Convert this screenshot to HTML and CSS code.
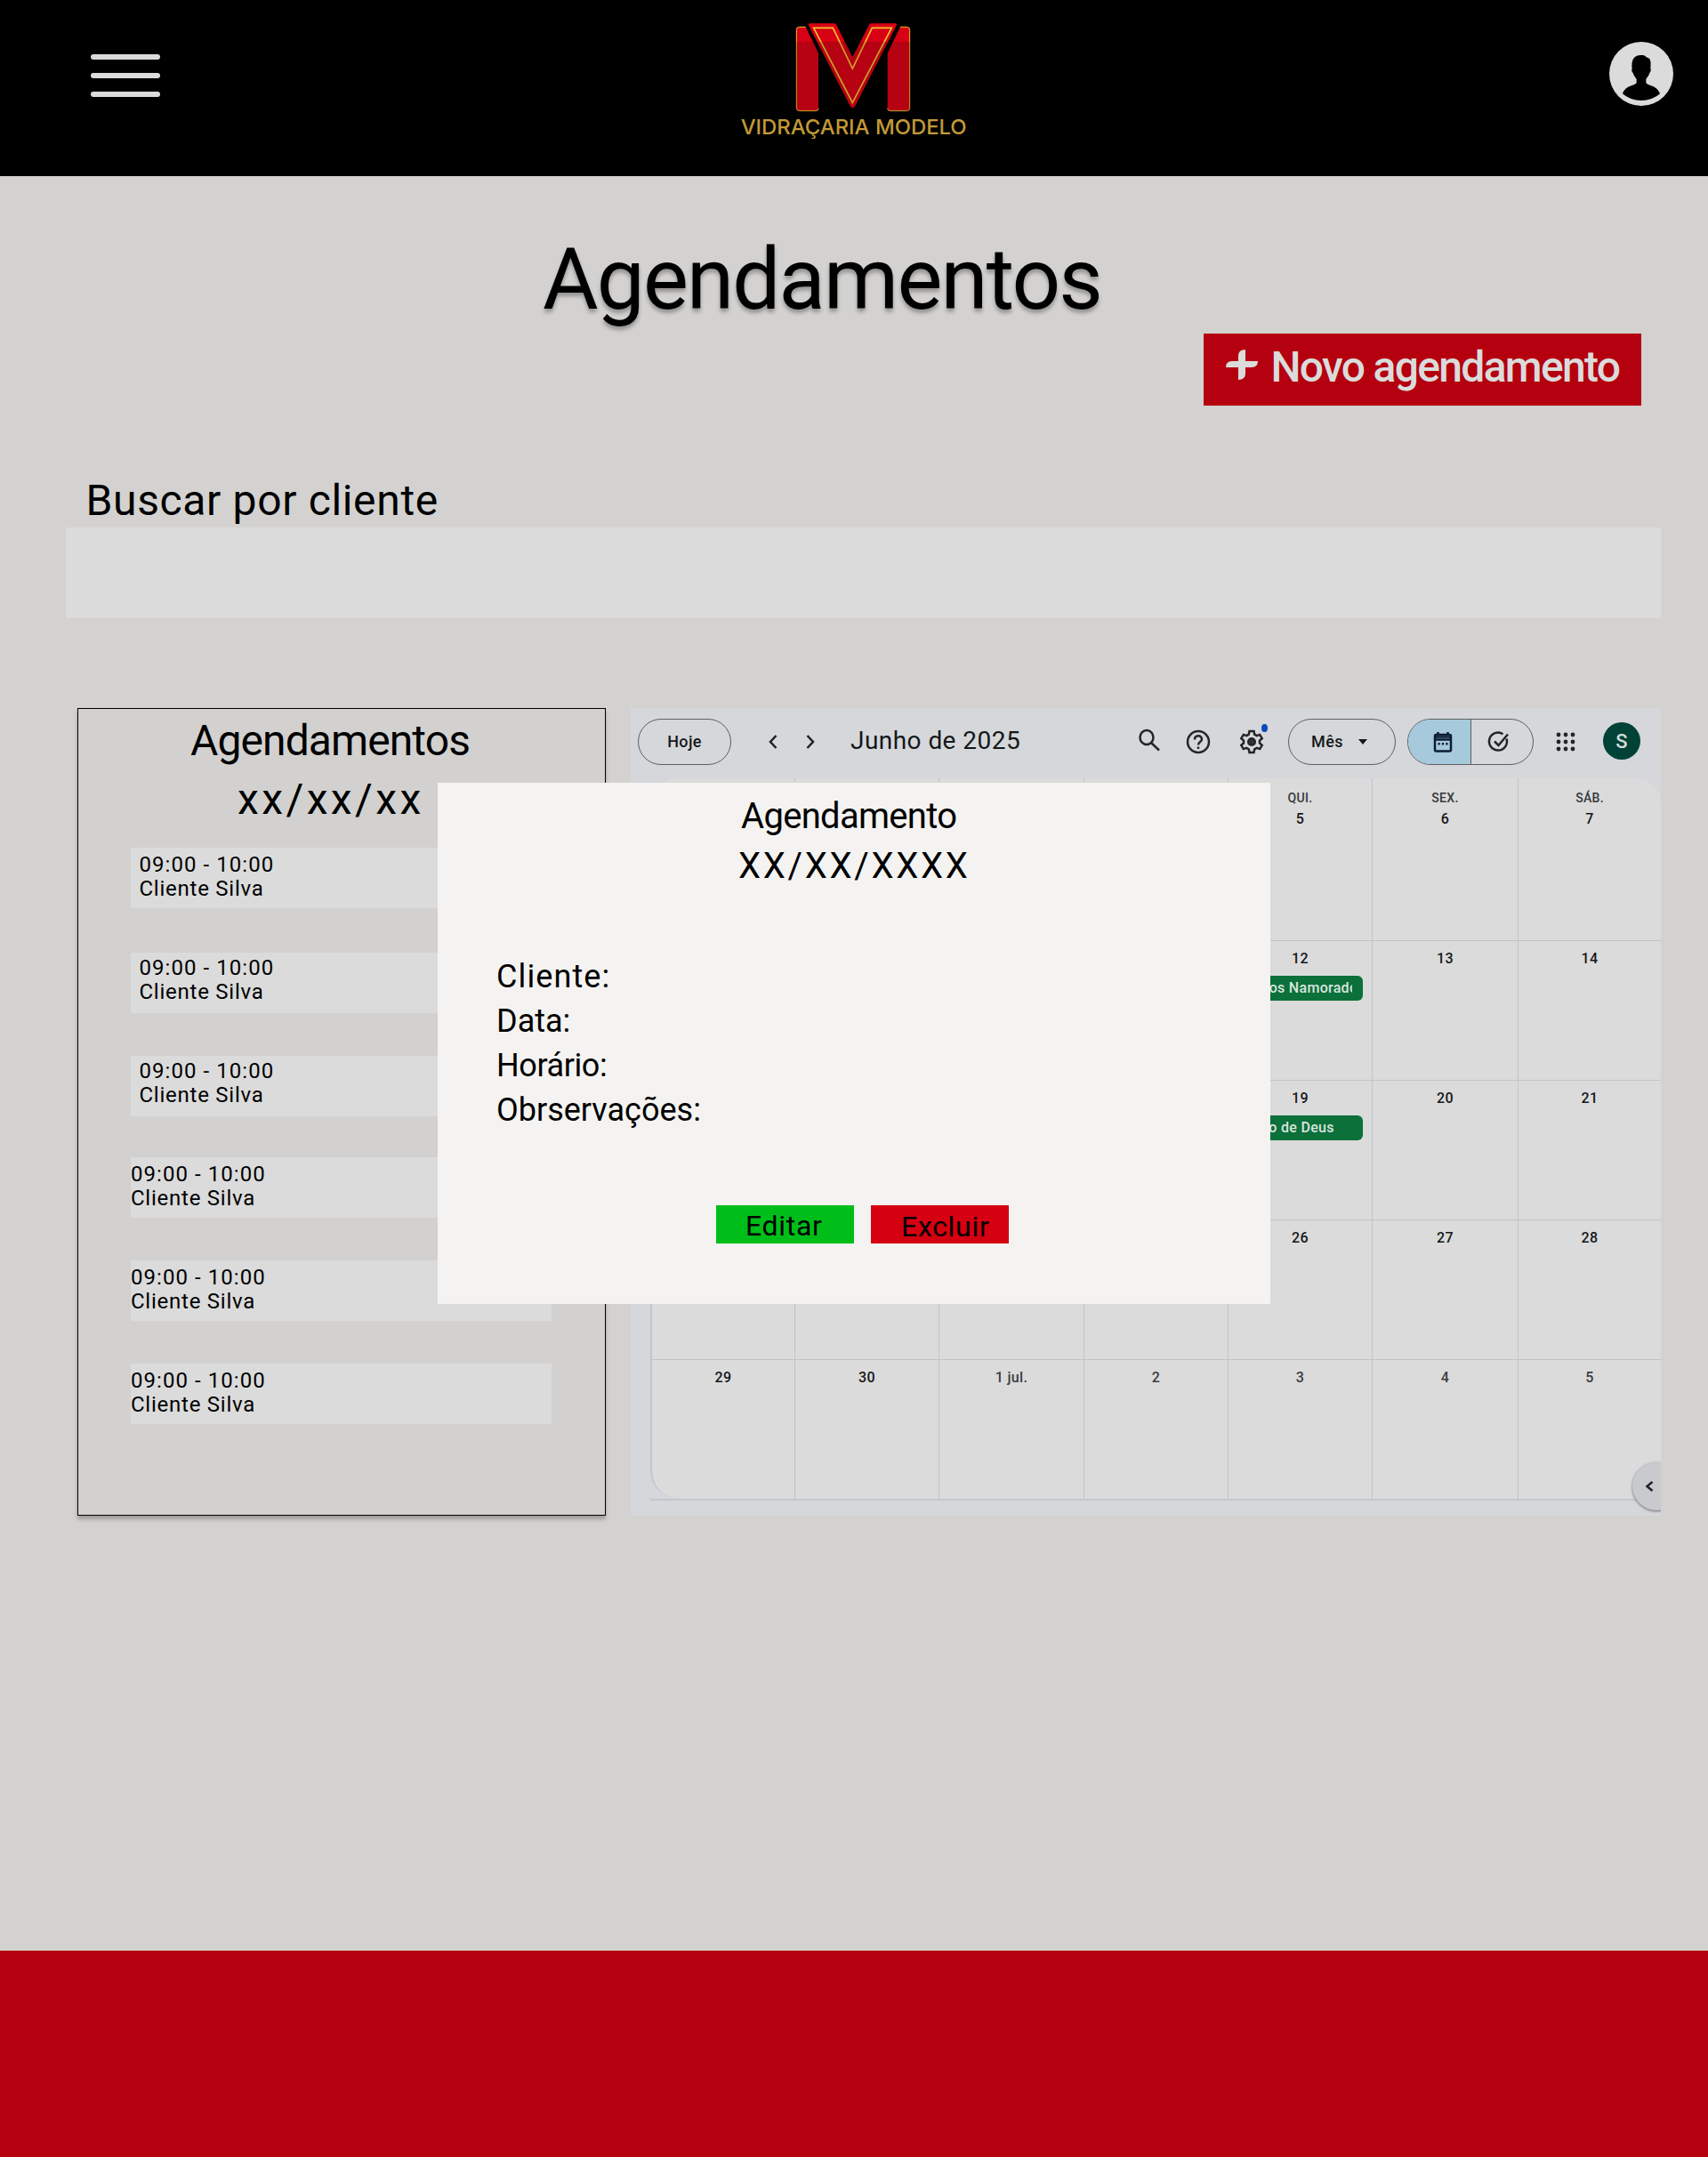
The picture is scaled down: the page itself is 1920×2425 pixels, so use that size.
FILE: index.html
```html
<!DOCTYPE html>
<html lang="pt-BR">
<head>
<meta charset="utf-8">
<title>Agendamentos - Vidraçaria Modelo</title>
<link rel="stylesheet" href="styles.css">
</head>
<body>
<header class="topbar">
  <button class="menu" aria-label="Menu"><span></span><span></span><span></span></button>
  <svg class="logo" viewBox="0 0 960 594">
    <defs>
      <linearGradient id="red" gradientUnits="userSpaceOnUse" x1="0" y1="0" x2="0" y2="594">
        <stop offset="0.236" stop-color="#d80014"/><stop offset="0.236" stop-color="#b60212"/>
      </linearGradient>
      <linearGradient id="gold" gradientUnits="userSpaceOnUse" x1="0" y1="0" x2="0" y2="594">
        <stop offset="0.236" stop-color="#f3c12c"/><stop offset="0.236" stop-color="#cda127"/>
      </linearGradient>
    </defs>
    <path d="M317 91H296Q286 91 286 101V364Q286 374 296 374H351Q360 374 360 365V179Z" fill="url(#red)"/>
    <path d="M636 91H658Q668 91 668 101V364Q668 374 658 374H602Q593 374 593 365V179Z" fill="url(#red)"/>
    <path d="M317 91H296Q286 91 286 101V364Q286 374 296 374H351Q360 374 360 365M636 91H658Q668 91 668 101V364Q668 374 658 374H602Q593 374 593 365" fill="none" stroke="url(#gold)" stroke-width="3"/>
    <path d="M330 79H414Q419 79 421 84L475 193L531 84Q533 79 538 79H620Q626 80 623 86L483 359Q475 369 468 359L327 86Q325 80 330 79Z" fill="url(#red)"/>
    <path d="M344 94H409L475 231L541 94H607L475 346Z" fill="none" stroke="url(#gold)" stroke-width="5"/>
    <text x="98" y="452" textLength="762" lengthAdjust="spacingAndGlyphs" class="logo-name">VIDRAÇARIA MODELO</text>
  </svg>
  <svg class="user" viewBox="0 0 216 216">
    <circle cx="108" cy="108" r="108" fill="#dbdbdb"/>
    <path d="M107 45C120 44 123 50 128 53C141 54 141 74 139 90C142 95 139 102 136 105C133 116 126 121 124 127V137C128 150 160 143 171 175C154 190 132 198 108 198S62 190 45 175C56 143 88 150 92 137V127C90 121 82 115 80 105C76 102 74 95 77 91C74 65 80 45 107 45Z" fill="#000"/>
  </svg>
</header>

<main class="page">
  <h1 class="title">Agendamentos</h1>
  <button class="new">
    <svg class="plus" viewBox="0 0 36 34"><path d="M14 7Q14 0 22 0V13H36Q36 20 29 20H22V27Q22 34 14 34V20H0Q0 13 7 13H14Z" fill="#dbdbdb"/></svg>
    <span class="new-text">Novo agendamento</span>
  </button>
  <label class="label" for="busca">Buscar por cliente</label>
  <input class="search" id="busca" type="text">

  <div class="board">
    <section class="panel">
      <h2 class="panel-title">Agendamentos</h2>
      <p class="panel-date">xx/xx/xx</p>
      <ul class="slots">
        <li class="slot indent"><span>09:00 - 10:00</span><span class="who">Cliente Silva</span></li>
        <li class="slot indent high"><span>09:00 - 10:00</span><span class="who">Cliente Silva</span></li>
        <li class="slot indent high"><span>09:00 - 10:00</span><span class="who">Cliente Silva</span></li>
        <li class="slot"><span>09:00 - 10:00</span><span class="who">Cliente Silva</span></li>
        <li class="slot"><span>09:00 - 10:00</span><span class="who">Cliente Silva</span></li>
        <li class="slot"><span>09:00 - 10:00</span><span class="who">Cliente Silva</span></li>
      </ul>
    </section>

    <section class="calendar">
      <div class="toolbar">
        <button class="pill today">Hoje</button>
        <svg class="chev prev" viewBox="0 0 10 16"><path d="M8.5 1L2 8l6.500 7"/></svg>
        <svg class="chev next" viewBox="0 0 10 16"><path d="M1.500 1L8 8l-6.500 7"/></svg>
        <span class="month">Junho de 2025</span>
        <svg class="ico find" viewBox="0 0 24 24"><ellipse cx="9" cy="9" rx="7.500" ry="8"/><path d="M14 15l9 8.500"/></svg>
        <svg class="ico help" viewBox="0 0 28 28"><circle cx="14" cy="14" r="12"/><path d="M10 11.500C10 6 18 6 18 11C18 14 14 14 14 17.500M14 19.500V22"/></svg>
        <span class="gear-wrap">
          <svg class="ico gear" viewBox="0 0 28 28"><path d="M11.500 2h5l.7 3.600 2.600 1.500 3.400-1.200 2.500 4.300-2.700 2.400v2.800l2.700 2.400-2.500 4.300-3.400-1.200-2.600 1.500-.7 3.600h-5l-.7-3.600-2.600-1.500-3.400 1.200-2.500-4.300 2.700-2.400v-2.800L2.300 10.200l2.500-4.300 3.400 1.200 2.600-1.500Z"/><circle cx="14" cy="14" r="3.800" fill="#333"/></svg>
          <i class="notice"></i>
        </span>
        <button class="pill view">Mês<svg class="caret" viewBox="0 0 10 6"><path d="M0 0h10L5 6Z"/></svg></button>
        <div class="pill switch">
          <span class="seg on"><svg class="ico cal" viewBox="0 0 22 24"><rect x="2" y="4" width="18" height="18.500" rx="1.500"/><path d="M2 6.500h18M2 9.500h18M5.500 1v3M16.500 1v3"/><path d="M5.500 14.200h2.200M9.900 14.200h2.200M14.300 14.200h2.200"/></svg></span>
          <span class="seg"><svg class="ico done" viewBox="0 0 24 24"><path d="M20.500 8.500A10 10 0 1 1 16.500 3.200M7 11.500l4.500 4.500L22 3.500"/></svg></span>
        </div>
        <svg class="apps" viewBox="0 0 22 22"><g><circle cx="3" cy="3" r="2.400"/><circle cx="11" cy="3" r="2.400"/><circle cx="19" cy="3" r="2.400"/><circle cx="3" cy="11" r="2.400"/><circle cx="11" cy="11" r="2.400"/><circle cx="19" cy="11" r="2.400"/><circle cx="3" cy="19" r="2.400"/><circle cx="11" cy="19" r="2.400"/><circle cx="19" cy="19" r="2.400"/></g></svg>
        <span class="account">S</span>
      </div>
      <div class="sheet">
        <div class="days">
          <div class="day"></div><div class="day"></div><div class="day"></div><div class="day"></div>
          <div class="day first"><small>QUI.</small>5</div><div class="day first"><small>SEX.</small>6</div><div class="day first"><small>SÁB.</small>7</div>
          <div class="day"></div><div class="day"></div><div class="day"></div><div class="day"></div>
          <div class="day">12<span class="event"><span>Dia dos Namorados</span></span></div><div class="day">13</div><div class="day">14</div>
          <div class="day"></div><div class="day"></div><div class="day"></div><div class="day"></div>
          <div class="day">19<span class="event wide"><span>Corpo de Deus</span></span></div><div class="day">20</div><div class="day">21</div>
          <div class="day"></div><div class="day"></div><div class="day"></div><div class="day"></div>
          <div class="day">26</div><div class="day">27</div><div class="day">28</div>
          <div class="day">29</div><div class="day">30</div><div class="day out">1 jul.</div><div class="day out">2</div>
          <div class="day out">3</div><div class="day out">4</div><div class="day out">5</div>
        </div>
      </div>
      <span class="drawer"><svg class="chev" viewBox="0 0 10 16"><path d="M8.500 3L2.500 8l6 5"/></svg></span>
    </section>
  </div>

  <div class="modal" role="dialog">
    <h2 class="modal-title">Agendamento</h2>
    <p class="modal-date">XX/XX/XXXX</p>
    <div class="fields">
      <p class="f-client">Cliente:</p>
      <p>Data:</p>
      <p class="f-time">Horário:</p>
      <p>Obrservações:</p>
    </div>
    <div class="actions">
      <button class="act edit">Editar</button>
      <button class="act remove">Excluir</button>
    </div>
  </div>
</main>
<footer class="footer"></footer>
</body>
</html>
```
FILE: styles.css
```css
* { box-sizing: border-box; margin: 0; padding: 0; }
body { width: 1920px; background: #d3d2d0; color: #000; font-family: Roboto, "Noto Sans", sans-serif; }
button { border: 0; font: inherit; color: inherit; background: none; }
svg { display: block; flex: none; overflow: visible; }
h1, h2 { font-weight: 400; }
ul { list-style: none; }

.topbar { height: 198px; background: #000; display: flex; align-items: flex-start; padding-left: 102px; }
.menu { width: 78px; margin-top: 61px; display: flex; flex-direction: column; gap: 15px; }
.menu span { height: 6px; border-radius: 3px; background: #dbdbdb; }
.logo { width: 320px; height: 198px; margin-left: 620px; }
.logo-name { font-family: Inter, sans-serif; font-size: 70px; font-weight: 500; fill: #c39a35; }
.user { width: 72px; height: 72px; margin: 47px 0 0 689px; }

.page { position: relative; height: 1995px; padding: 68px 53px 0 74px; display: flex; flex-direction: column; }
.title { font-size: 96px; line-height: 96px; letter-spacing: -1.800px; margin-left: 536px; text-shadow: 0 4px 4px rgba(0,0,0,.3); }
.new { align-self: flex-end; margin: 13px 22px 0 0; width: 492px; height: 81px; padding: 0 0 11px 24.500px; background: #b4000f; color: #dbdbdb; display: flex; align-items: center; gap: 15px; font-size: 48px; font-weight: 500; letter-spacing: -1.700px; white-space: nowrap; }
.new-text { padding-top: 5px; }
.plus { width: 36px; height: 34px; }
.label { margin: 83px 0 0 22.500px; font-size: 48px; line-height: 48px; letter-spacing: .65px; }
.search { margin-top: 6px; height: 102px; border: 0; background: #dbdbdb; }

.board { margin-top: 101px; height: 908px; display: flex; justify-content: space-between; padding-left: 13px; }
.panel { width: 594px; border: 1px solid #000; background: #d2d1cf; box-shadow: 0 4px 4px rgba(0,0,0,.25); padding: 12px 0 0 59px; }
.panel-title { font-size: 48px; line-height: 48px; letter-spacing: -.9px; margin-left: 67px; }
.panel-date { font-size: 48px; line-height: 48px; letter-spacing: 3.400px; margin: 18px 0 0 120px; }
.slots { margin-top: 30px; width: 473px; display: flex; flex-direction: column; gap: 48px; }
.slot { height: 68px; padding-top: 6px; background: #dbdbdb; font-size: 24px; line-height: 27px; letter-spacing: 1.050px; display: flex; flex-direction: column; }
.slot.indent { padding-left: 9.500px; }
.slot.high { padding-top: 4px; }
.slot:nth-child(2) { margin-top: 2px; }
.slot:nth-child(4) { margin-top: -2px; }
.who { letter-spacing: .75px; }

.calendar { position: relative; width: 1158px; background: #d5d7db; overflow: hidden; color: #15171a; }
.toolbar { height: 75px; display: flex; align-items: center; padding: 0 23px 0 8px; }
.pill { height: 52px; border: 1px solid #5d5f60; border-radius: 26px; font-size: 18px; font-weight: 500; letter-spacing: .4px; flex: none; }
.today { width: 105px; }
.chev { width: 10px; height: 16px; fill: none; stroke: #202124; stroke-width: 2.500; }
.prev { margin-left: 42px; }
.next { margin-left: 32px; }
.month { flex: 1; margin-left: 40px; font-size: 28px; letter-spacing: .45px; margin-top: -2px; }
.ico { fill: none; stroke: #232527; stroke-width: 2.500; }
.find { width: 24px; height: 24px; margin-top: -3px; }
.help { width: 28px; height: 28px; margin-left: 29px; }
.gear-wrap { position: relative; margin-left: 32px; }
.gear { width: 28px; height: 28px; }
.notice { position: absolute; left: 25px; top: -6px; width: 7px; height: 9px; border-radius: 50%; background: #0a48bd; }
.view { width: 121px; margin-left: 27px; padding-left: 25px; display: flex; align-items: center; gap: 17px; }
.caret { width: 10px; height: 6px; fill: #15171a; }
.switch { width: 142px; margin-left: 13px; display: flex; overflow: hidden; }
.seg { flex: 1; display: flex; align-items: center; justify-content: center; }
.seg.on { background: #a7c9dc; border-right: 1px solid #5d5f60; }
.cal { width: 22px; height: 24px; stroke: #0b1d33; margin-left: 8px; }
.done { width: 24px; height: 24px; margin-right: 6px; }
.apps { width: 22px; height: 22px; margin-left: 25px; fill: #232527; }
.account { width: 42px; height: 42px; margin: -2px 0 0 31px; border-radius: 50%; background: #004236; color: #d3dcd9; font-size: 22px; font-weight: 500; line-height: 43px; text-align: center; flex: none; }
.sheet { margin: 4px 0 0 22px; border-bottom: 2px solid #c4c8cd; height: 812px; }
.days { height: 810px; background: #dbdbdb; border-left: 2px solid #c1c6cc; border-radius: 28px 28px 0 32px; overflow: hidden; display: grid; grid-template-columns: 160px 162px 163px 162px 162px 164px 161px; grid-template-rows: 182px 157px 157px 157px 157px; }
.day { border: 0 solid #bfc4ca; border-left-width: 1.500px; border-top-width: 1.500px; padding-top: 10px; font-size: 16px; font-weight: 500; line-height: 20px; text-align: center; letter-spacing: .3px; }
.day:nth-child(7n+1) { border-left: 0; }
.day:nth-child(-n+7) { border-top: 0; }
.day.first { padding-top: 11px; line-height: 26px; }
.day small { display: block; line-height: 22px; font-size: 14px; color: #36383b; }
.day.out { color: #3a3c40; }
.event { display: block; margin: 9px 10px 0 0; height: 28px; border-radius: 6px; background: #0b703a; color: #dbe5df; padding: 0 12px 0 8px; text-align: left; line-height: 27px; }
.event.wide { padding-left: 10px; }
.event span { display: block; overflow: hidden; white-space: nowrap; }
.drawer { position: absolute; right: -22px; bottom: 6px; width: 54px; height: 54px; border-radius: 50%; background: #c8cace; box-shadow: 0 1px 3px rgba(0,0,0,.5); padding: 19px 0 0 14px; }

.modal { position: absolute; left: 492px; top: 682px; width: 936px; height: 586px; background: #f4f3f1; }
.modal-title { margin: 18px 0 0 341px; font-size: 40px; line-height: 40px; letter-spacing: -.7px; }
.modal-date { margin: 16px 0 0 338px; font-size: 40px; line-height: 40px; letter-spacing: 2.700px; }
.fields { margin: 79px 0 0 66px; font-size: 36px; line-height: 50px; }
.f-client { letter-spacing: 1.100px; }
.f-time { letter-spacing: -.4px; }
.actions { display: flex; gap: 19px; margin: 82px 0 0 313px; }
.act { width: 155px; height: 43px; font-size: 32px; line-height: 46px; letter-spacing: .7px; text-align: left; padding-left: 33px; }
.edit { background: #00be19; }
.remove { background: #d50011; line-height: 49px; padding-left: 34px; }

.footer { height: 232px; background: #b4000f; }
```
